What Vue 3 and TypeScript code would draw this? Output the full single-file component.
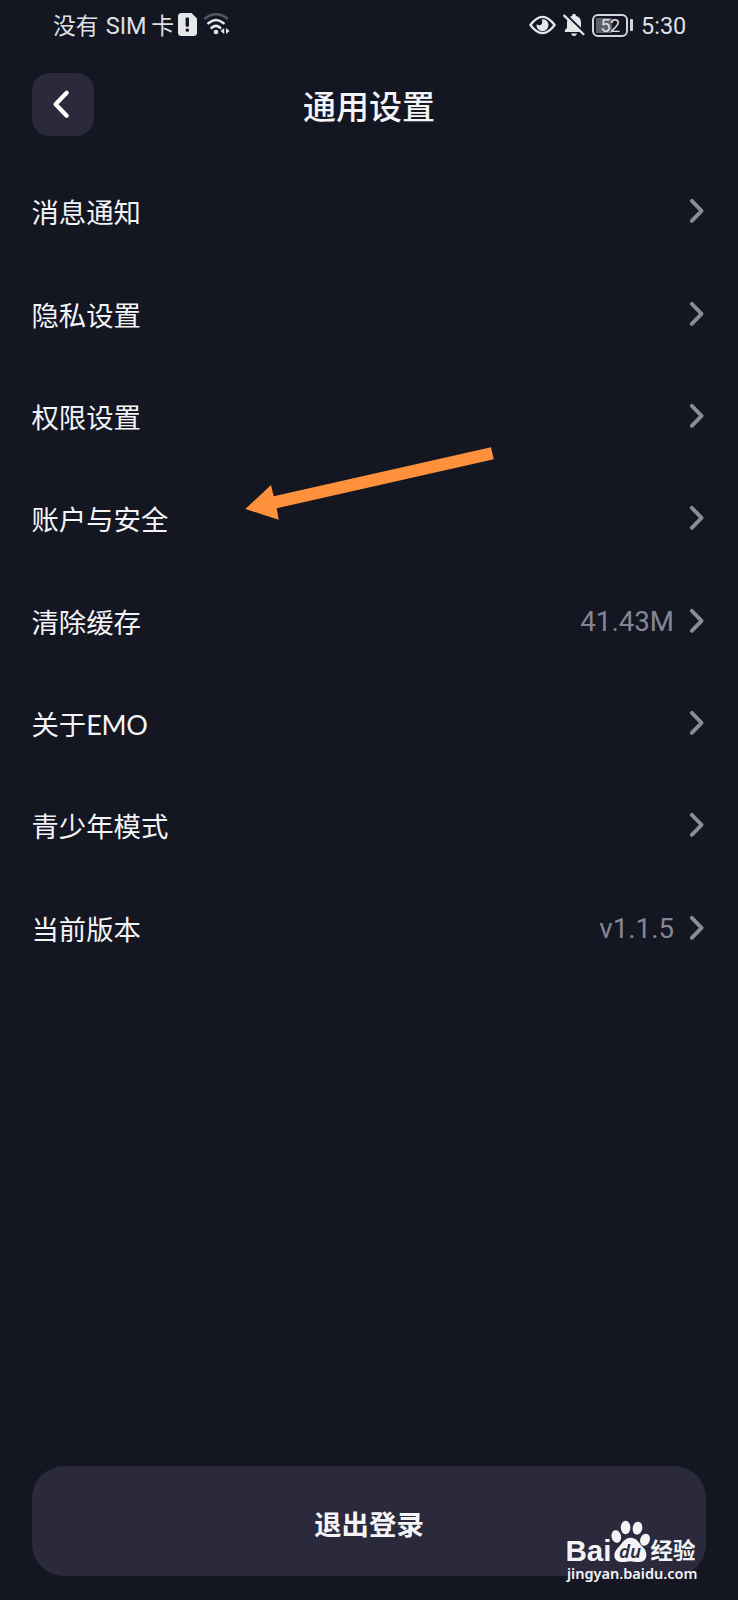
<script setup lang="ts">
interface SettingRow {
  label: string
  latin?: string
  value?: string
}

const rows: SettingRow[] = [
  { label: '消息通知' },
  { label: '隐私设置' },
  { label: '权限设置' },
  { label: '账户与安全' },
  { label: '清除缓存', value: '41.43M' },
  { label: '关于', latin: 'EMO' },
  { label: '青少年模式' },
  { label: '当前版本', value: 'v1.1.5' },
]
</script>

<template>
  <main class="screen">
    <div class="status">
      <span class="carrier">没有 <span class="sim">SIM</span> 卡</span>
      <svg class="alert" width="19" height="23" viewBox="0 0 19 23">
        <path d="M3.5 0H13.5L19 5.5V19.5Q19 23 15.5 23H3.5Q0 23 0 19.5V3.5Q0 0 3.5 0Z" fill="#e6e7eb" />
        <rect x="7.6" y="4.6" width="3.4" height="9.2" rx="1" fill="#171925" />
        <rect x="7.6" y="15.6" width="3.4" height="3.2" rx="1.4" fill="#171925" />
      </svg>
      <svg class="wifi" width="26" height="23" viewBox="0 0 26 23" fill="none" stroke-linecap="round">
        <path d="M1.2 5.2Q12 -2.8 23 5.2" stroke="#555763" stroke-width="2.6" />
        <path d="M4.4 10.2Q12 3.8 19.6 10.2" stroke="#e6e7eb" stroke-width="2.6" />
        <path d="M7.6 14.8Q12 11 16.2 14.8" stroke="#e6e7eb" stroke-width="2.6" />
        <circle cx="12" cy="19" r="2.3" fill="#e6e7eb" />
        <path d="M20.2 15V21L16.6 18ZM22 15V21L25.6 18Z" fill="#e6e7eb" />
      </svg>
      <span class="spacer"></span>
      <svg class="eye" width="27" height="20" viewBox="0 0 27 20">
        <path d="M1.4 10Q13.5 -6.2 25.6 10Q13.5 26.2 1.4 10Z" fill="none" stroke="#e6e7eb" stroke-width="2.3" stroke-linejoin="round" />
        <path d="M12.8 4.2A6 6 0 1 1 7.6 9.2Q11.6 11.6 13 8.6Q13.6 6.5 12.8 4.2Z" fill="#e6e7eb" />
      </svg>
      <svg class="bell" width="22" height="24" viewBox="0 0 22 24">
        <path d="M1.8 19V17.4L4 14.8V9.5Q4 4 9 2.9Q9.2 .8 11 .8T13 2.9Q18 4 18 9.5V14.8L20.2 17.4V19Z" fill="#e6e7eb" />
        <path d="M8 20.5H14Q13.4 23 11 23T8 20.5Z" fill="#e6e7eb" />
        <path d="M2.6 1.2L22 20" stroke="#141622" stroke-width="2" />
        <path d="M1.2 2.6L20.5 21.2" stroke="#e6e7eb" stroke-width="2.2" stroke-linecap="round" />
      </svg>
      <span class="battery"><span class="level">52</span></span>
      <span class="nub"></span>
      <span class="time">5:30</span>
    </div>

    <header class="header">
      <button class="back" aria-label="返回">
        <svg width="62" height="63" viewBox="0 0 62 63" fill="none">
          <path d="M34.7 19.8L23.6 31.3L34.7 42.8" stroke="#fff" stroke-width="4.2" stroke-linecap="round" stroke-linejoin="round" />
        </svg>
      </button>
      <h1>通用设置</h1>
    </header>

    <section class="list">
      <div v-for="row in rows" :key="row.label" class="row">
        <span class="label">{{ row.label }}<span v-if="row.latin" class="latin">{{ row.latin }}</span></span>
        <span v-if="row.value" class="value">{{ row.value }}</span>
        <svg class="chevron" width="16" height="26" viewBox="0 0 16 26" fill="none">
          <path d="M2.8 2.8L12.6 12.8L2.8 22.8" stroke="#8b8c98" stroke-width="3.8" stroke-linecap="round" stroke-linejoin="round" />
        </svg>
      </div>
    </section>

    <button class="logout"><span>退出登录</span></button>

    <svg class="pointer" width="250" height="76" viewBox="245 446 250 76">
      <path d="M245.3 509L271 485L273.7 496.3L491 447.3L493.8 459.3L276.7 508.3L278.7 519.8Z" fill="#ff913c" />
    </svg>

    <div class="watermark">
      <svg width="134" height="64" viewBox="566 1520 134 64">
        <g fill="#f4f4f6">
          <ellipse cx="616.3" cy="1536.5" rx="4.8" ry="6.3" transform="rotate(-12 616.3 1536.5)" />
          <ellipse cx="625.6" cy="1527.5" rx="4.8" ry="6.7" />
          <ellipse cx="637.5" cy="1528.2" rx="4.8" ry="6.5" transform="rotate(10 637.5 1528.2)" />
          <ellipse cx="645" cy="1539.7" rx="4.8" ry="6.2" transform="rotate(22 645 1539.7)" />
          <path d="M630.5 1537.8C637 1537.8 638.5 1543 643 1547.3C648 1552 648 1561.8 639.5 1562C635 1562.2 634 1561.2 630.5 1561.2S625 1562.2 621 1562C613 1561.6 612.8 1553 617.5 1548.3C622 1543.8 624.5 1537.8 630.5 1537.8Z" />
          <text class="brand" x="565.5" y="1561" textLength="46" lengthAdjust="spacingAndGlyphs">Bai</text>
          <text class="brand cjk" x="650.5" y="1559.3" textLength="45" lengthAdjust="spacingAndGlyphs">经验</text>
          <text class="site" x="567" y="1579.3" textLength="130.5" lengthAdjust="spacingAndGlyphs">jingyan.baidu.com</text>
        </g>
        <text class="du" x="619" y="1558" textLength="22" lengthAdjust="spacingAndGlyphs">du</text>
      </svg>
    </div>
  </main>
</template>

<style>
html,
body {
  background: #141622;
}
</style>

<style scoped>
* {
  box-sizing: border-box;
}
.screen {
  position: relative;
  display: flex;
  flex-direction: column;
  width: 738px;
  height: 1600px;
  overflow: hidden;
  background: #141622;
  color: #f3f4f7;
  font-family: Roboto, "Noto Sans CJK SC", sans-serif;
}
button {
  border: 0;
  padding: 0;
  font-family: inherit;
}
.status {
  display: flex;
  align-items: center;
  height: 50px;
  padding: 0 53px 0 53px;
  color: #dfe0e5;
}
.carrier {
  width: 125px;
  padding-top: 2px;
  font-size: 22.8px;
  line-height: 50px;
  white-space: pre;
}
.sim {
  margin-left: 1.5px;
  margin-right: -1px;
  font-size: 23.5px;
}
.alert {
  margin-top: -1px;
}
.wifi {
  margin-left: 7px;
  margin-top: -2px;
}
.spacer {
  flex: 1;
}
.bell {
  margin-left: 7px;
}
.battery {
  display: flex;
  align-items: center;
  justify-content: center;
  width: 36px;
  height: 23px;
  margin-left: 7px;
  border: 2px solid #d5d6dc;
  border-radius: 6px;
  background: linear-gradient(90deg, #5d5f69 0 16px, transparent 16px) 2px 2px / 28px 15px no-repeat;
}
.level {
  font-size: 18px;
  line-height: 19px;
  letter-spacing: -0.6px;
}
.nub {
  width: 3px;
  height: 12px;
  margin-left: 2px;
  border-radius: 1px;
  background: #d5d6dc;
}
.time {
  margin-left: 8px;
  padding-top: 2px;
  width: 44px;
  font-size: 23.5px;
  line-height: 50px;
  white-space: nowrap;
}
.header {
  display: grid;
  grid-template-columns: 62px 1fr 62px;
  align-items: center;
  height: 63px;
  margin: 23px 32px 0;
}
.back {
  width: 62px;
  height: 63px;
  border-radius: 18px;
  background: #2a2a3c;
}
.back svg {
  display: block;
}
h1 {
  margin: 6px 0 0;
  text-align: center;
  font-size: 33px;
  font-weight: 500;
  line-height: 48px;
}
.list {
  display: flex;
  flex-direction: column;
  margin: 24px 32px 0 31.4px;
}
.row {
  display: flex;
  align-items: center;
  height: 102.35px;
}
.label {
  flex: 1;
  font-size: 27.4px;
  line-height: 40px;
  padding-top: 6px;
}
.latin {
  font-family: Lato, sans-serif;
  font-size: 27px;
  letter-spacing: -0.3px;
}
.value {
  margin-right: 15px;
  padding-top: 2px;
  color: #858693;
  font-size: 27.7px;
}
.chevron {
  margin-right: 1px;
}
.logout {
  height: 110px;
  margin: auto 32px 24px;
  border-radius: 32px;
  background: #2a2a3c;
  color: #f5f5f8;
  font-size: 27.4px;
  font-weight: 700;
}
.logout span {
  display: block;
  padding-top: 3px;
}
.pointer {
  position: absolute;
  left: 245px;
  top: 446px;
}
.watermark {
  position: absolute;
  left: 566px;
  top: 1520px;
}
.watermark svg {
  display: block;
  overflow: visible;
}
.brand {
  font-family: "Liberation Sans", sans-serif;
  font-size: 29px;
  font-weight: 700;
}
.cjk {
  font-family: "Noto Sans CJK SC", sans-serif;
  font-size: 23px;
}
.site {
  font-family: "Noto Sans", sans-serif;
  font-size: 15px;
  font-weight: 600;
}
.du {
  font-family: "Noto Sans", sans-serif;
  font-size: 18.5px;
  font-style: italic;
  font-weight: 600;
  fill: #2a2a3c;
}
</style>
